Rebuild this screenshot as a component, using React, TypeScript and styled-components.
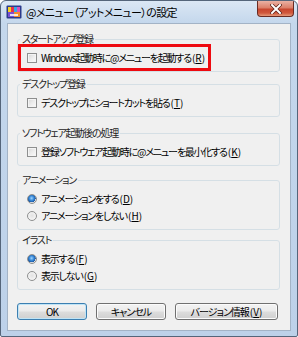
import React from "react";
import styled, { createGlobalStyle } from "styled-components";

const GlobalStyle = createGlobalStyle`
  html, body {
    margin: 0;
    padding: 0;
    background: #ffffff;
  }
  body {
    font-family: "Noto Sans CJK JP", "Liberation Sans", sans-serif;
    font-feature-settings: "palt";
  }
`;

const Window = styled.div`
  box-sizing: border-box;
  width: 298px;
  height: 337px;
  border: 1px solid #55657a;
  border-radius: 6px 6px 2px 2px;
  background: linear-gradient(to bottom, #dbe7f4 0px, #c4d7ec 22px, #bdd1e9 100%);
  display: flex;
  flex-direction: column;
  overflow: hidden;
`;

const TitleBar = styled.div`
  height: 22px;
  flex: none;
  display: flex;
  align-items: center;
  padding-left: 5px;
`;

const TitleText = styled.span`
  margin-left: 4px;
  font-size: 11px;
  letter-spacing: -0.6px;
  line-height: 14px;
  color: #000;
`;

const CloseButton = styled.div`
  align-self: flex-start;
  margin-left: auto;
  margin-right: 3px;
  width: 37px;
  height: 16px;
  box-sizing: border-box;
  border: 1px solid #6a2b22;
  border-top: none;
  border-radius: 0 0 4px 4px;
  background: linear-gradient(
    to bottom,
    #eab1a3 0%,
    #dc806a 45%,
    #c8472f 55%,
    #d0583c 80%,
    #e69a7a 100%
  );
  display: flex;
  align-items: center;
  justify-content: center;
`;

const Client = styled.div`
  flex: 1;
  margin: 0 6px;
  border: 1px solid #a3b3c6;
  background: #f0f0f0;
  padding: 9px 10px 0 9px;
  display: flex;
  flex-direction: column;
`;

const BottomFrame = styled.div`
  height: 5px;
  flex: none;
`;

const Group = styled.fieldset<{ $mt: number }>`
  margin: ${(p) => p.$mt}px 0 0 0;
  padding: 4px 9px 5px 8px;
  border: 1px solid #d5dfe5;
  border-radius: 3px;
  min-width: 0;
  display: flex;
  flex-direction: column;
`;

const Legend = styled.legend`
  margin-left: -6px;
  padding: 0 2px;
  font-size: 10px;
  letter-spacing: -1.2px;
  line-height: 12px;
  color: #1e1e1e;
`;

const Row = styled.div`
  position: relative;
  height: 17px;
  display: flex;
  align-items: center;
  font-size: 10px;
  letter-spacing: -1.2px;
  color: #000;
  white-space: nowrap;
`;

// access key such as "(R)", kept at normal spacing so the brackets stay readable
const Key = styled.span`
  letter-spacing: 0;
  margin-left: 1px;
`;

const MarkSlot = styled.span`
  width: 11px;
  height: 11px;
  flex: none;
  display: flex;
  align-items: center;
  justify-content: center;
  margin-right: 4px;
`;

const CheckBox = styled.span`
  box-sizing: border-box;
  width: 10px;
  height: 10px;
  border: 1px solid #8e8f8f;
  background: linear-gradient(135deg, #d6d6d6 0%, #ececec 50%, #fbfbfb 100%);
  box-shadow: inset 0 0 0 1px #f4f4f4;
`;

const Radio = styled.span<{ $on: boolean }>`
  box-sizing: border-box;
  width: 10px;
  height: 10px;
  border-radius: 50%;
  border: 1px solid #8e8f8f;
  background: ${(p) =>
    p.$on
      ? "radial-gradient(circle at 45% 40%, #9fd4ff 0%, #3a8ad8 35%, #1c5aa6 60%, #dcdcdc 62%, #f2f2f2 100%)"
      : "radial-gradient(circle at 50% 45%, #e2e2e2 0%, #f4f4f4 70%, #fbfbfb 100%)"};
`;

const Highlight = styled.span`
  position: absolute;
  left: -8px;
  top: -5px;
  bottom: -5px;
  width: 193px;
  box-sizing: border-box;
  border: 3px solid #ee0a10;
  pointer-events: none;
`;

const ButtonRow = styled.div`
  display: flex;
  gap: 9px;
  margin-top: 13px;
`;

const Button = styled.div<{ $w: number; $default?: boolean }>`
  box-sizing: border-box;
  width: ${(p) => p.$w}px;
  height: 17px;
  border: 1px solid ${(p) => (p.$default ? "#3c7fb1" : "#707070")};
  border-radius: 3px;
  background: linear-gradient(
    to bottom,
    #f3f3f3 0%,
    #ebebeb 48%,
    #dddddd 52%,
    #cfcfcf 100%
  );
  box-shadow: inset 0 0 0 1px ${(p) => (p.$default ? "#c0e4f6" : "#fbfbfb")};
  display: flex;
  align-items: center;
  justify-content: center;
  font-size: 10px;
  letter-spacing: -1px;
  color: #000;
  white-space: nowrap;
`;

function AppIcon() {
  return (
    <svg width="16" height="14" viewBox="0 0 16 14">
      <rect x="0.5" y="0.5" width="15" height="13" rx="1" fill="#2b3a8c" />
      <rect x="2" y="2" width="3" height="5" fill="#f7d21c" />
      <rect x="5" y="2" width="3" height="5" fill="#e8304a" />
      <rect x="8" y="2" width="3" height="5" fill="#36a7e6" />
      <rect x="11" y="2" width="3" height="5" fill="#d94fc0" />
      <rect x="2" y="7" width="6" height="5" fill="#7b4fd0" />
      <rect x="8" y="7" width="6" height="5" fill="#f28a2e" />
      <rect x="4" y="9" width="8" height="2" fill="#ffffff" opacity="0.8" />
    </svg>
  );
}

function CloseGlyph() {
  return (
    <svg width="12" height="10" viewBox="0 0 12 10">
      <path
        d="M2 1 L10 9 M10 1 L2 9"
        stroke="#5a1e16"
        strokeWidth="3.4"
        strokeLinecap="square"
      />
      <path
        d="M2 1 L10 9 M10 1 L2 9"
        stroke="#ffffff"
        strokeWidth="2"
        strokeLinecap="square"
      />
    </svg>
  );
}

interface OptionProps {
  kind: "check" | "radio";
  on?: boolean;
  highlight?: boolean;
  accessKey: string;
  children: React.ReactNode;
}

function Option(props: OptionProps) {
  return (
    <Row>
      {props.highlight && <Highlight />}
      <MarkSlot>
        {props.kind === "check" ? <CheckBox /> : <Radio $on={!!props.on} />}
      </MarkSlot>
      <span>{props.children}</span>
      <Key>
        (<u>{props.accessKey}</u>)
      </Key>
    </Row>
  );
}

export default function App() {
  return (
    <>
      <GlobalStyle />
      <Window>
        <TitleBar>
          <AppIcon />
          <TitleText>@メニュー（アットメニュー）の設定</TitleText>
          <CloseButton>
            <CloseGlyph />
          </CloseButton>
        </TitleBar>
        <Client>
          <Group $mt={0}>
            <Legend>スタートアップ登録</Legend>
            <Option kind="check" highlight accessKey="R">
              Windows起動時に@メニューを起動する
            </Option>
          </Group>
          <Group $mt={6}>
            <Legend>デスクトップ登録</Legend>
            <Option kind="check" accessKey="T">
              デスクトップにショートカットを貼る
            </Option>
          </Group>
          <Group $mt={10}>
            <Legend>ソフトウェア起動後の処理</Legend>
            <Option kind="check" accessKey="K">
              登録ソフトウェア起動時に@メニューを最小化する
            </Option>
          </Group>
          <Group $mt={8}>
            <Legend>アニメーション</Legend>
            <Option kind="radio" on accessKey="D">
              アニメーションをする
            </Option>
            <Option kind="radio" accessKey="H">
              アニメーションをしない
            </Option>
          </Group>
          <Group $mt={4}>
            <Legend>イラスト</Legend>
            <Option kind="radio" on accessKey="F">
              表示する
            </Option>
            <Option kind="radio" accessKey="G">
              表示しない
            </Option>
          </Group>
          <ButtonRow>
            <Button $w={70} $default>
              OK
            </Button>
            <Button $w={70}>キャンセル</Button>
            <Button $w={103}>
              バージョン情報
              <Key>
                (<u>V</u>)
              </Key>
            </Button>
          </ButtonRow>
        </Client>
        <BottomFrame />
      </Window>
    </>
  );
}
